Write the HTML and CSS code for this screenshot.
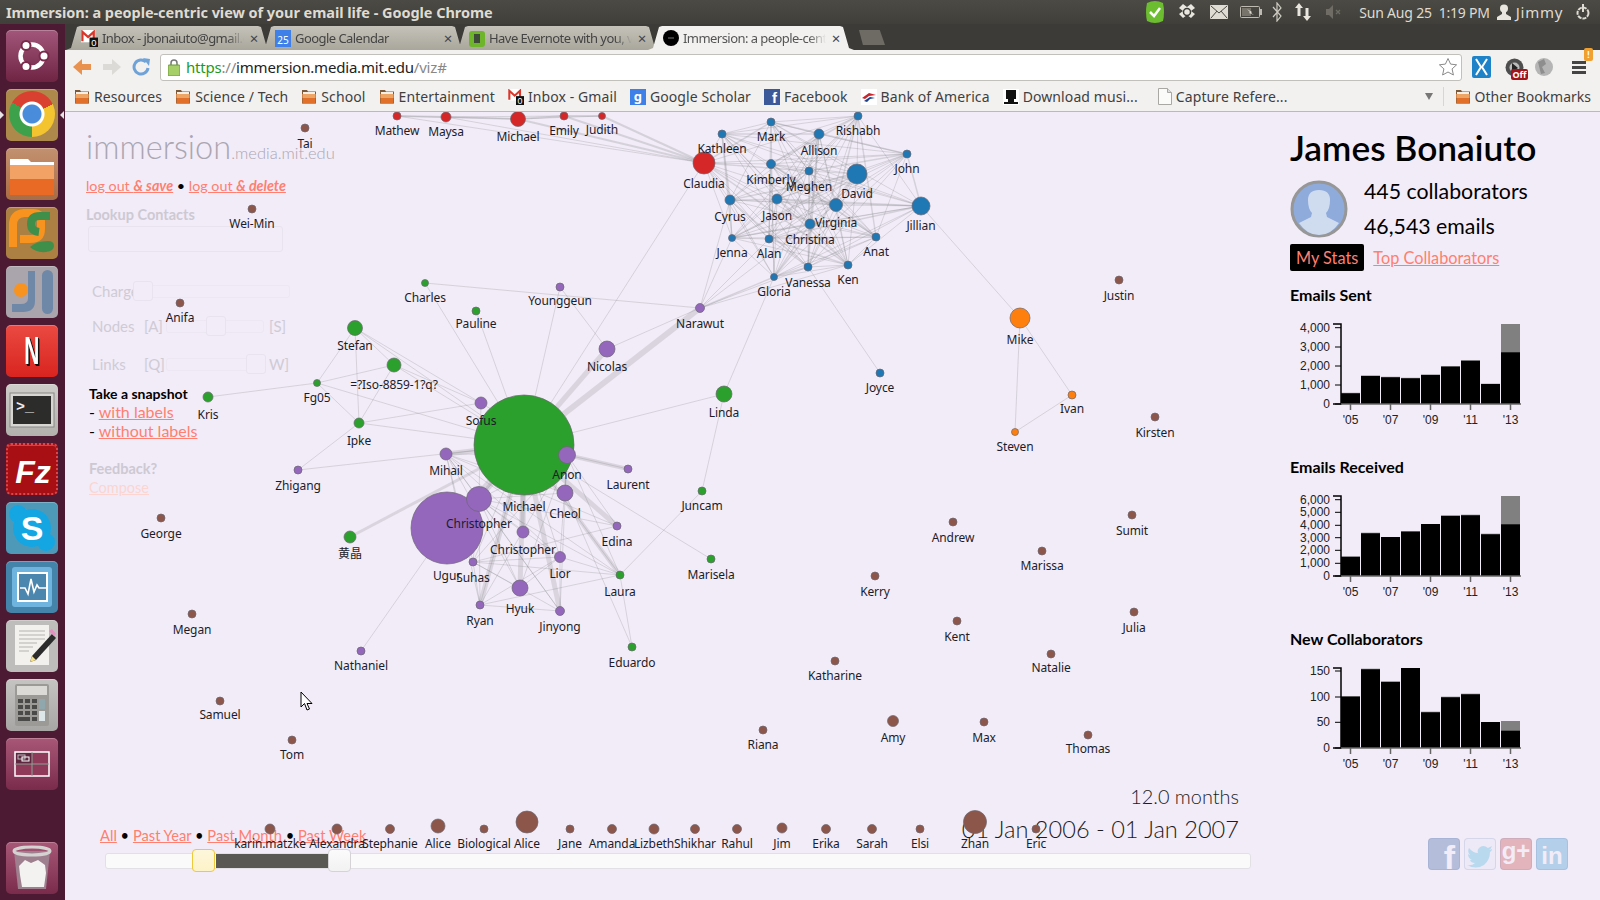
FILE: index.html
```html
<!DOCTYPE html>
<html lang="en">

<head>
    <meta charset="UTF-8">
    <title>Immersion: a people-centric view of your email life</title>
    <link rel="stylesheet" href="styles.css">
</head>

<body>
    <svg class="defs" width="0" height="0">
        <symbol id="folder" viewBox="0 0 16 15">
            <path d="M1 1h5l1 1.500h8v12H1z" fill="#7a5a3a"/>
            <rect x="2" y="3" width="12" height="2" fill="#f4f0e8"/>
            <rect x="1.500" y="5" width="13" height="9.500" fill="#e0702a"/>
            <rect x="1.500" y="5" width="13" height="4" fill="#eda565"/>
        </symbol>
        <symbol id="gmail" viewBox="0 0 18 18">
            <rect x="0" y="0" width="15" height="13" fill="#fff"/>
            <path d="M1.500 12V2l6 5.500 6-5.500v10" fill="none" stroke="#d8372c" stroke-width="2.400"/>
            <rect x="9" y="8" width="9" height="10" fill="#111"/>
        </symbol>
    </svg>

    <header class="topbar">
        <div class="window-title">Immersion: a people-centric view of your email life - Google Chrome</div>
        <div class="indicators">
            <svg class="ind ind-skype" width="22" height="24" viewBox="0 0 22 24"><path d="M3 3q8-4 16 0 2 9 0 18-8 4-16 0Q1 12 3 3z" fill="#6cbd2f"/><path d="M6 12l4 4 6-8" fill="none" stroke="#fff" stroke-width="2.500"/></svg>
            <svg class="ind ind-box" width="18" height="18" viewBox="0 0 18 18"><path d="M5 1l4 3 4-3 4 4-4 3 4 3-4 4-4-3-4 3-4-4 4-3-4-3z" fill="#e8e6df"/><circle cx="9" cy="9" r="3.500" fill="none" stroke="#3f3d38" stroke-width="1.500"/></svg>
            <svg class="ind ind-mail" width="18" height="14" viewBox="0 0 18 14"><rect width="18" height="14" rx="1" fill="#dfdcd3"/><path d="M1 1l8 7 8-7M1 13l6-7M17 13l-6-7" fill="none" stroke="#4a4842"/></svg>
            <svg class="ind ind-battery" width="22" height="12" viewBox="0 0 22 12"><rect x=".5" y=".5" width="19" height="11" rx="1" fill="none" stroke="#bdbab1"/><rect x="20" y="3" width="2" height="6" fill="#bdbab1"/><rect x="2" y="2" width="9" height="8" fill="#77746c"/><path d="M7 3l5 3-1 1 3 2-5-2 1-1z" fill="#dfdcd3"/></svg>
            <svg class="ind ind-blue" width="10" height="20" viewBox="0 0 10 20"><path d="M1 5l8 9-4 5V1l4 5-8 9" fill="none" stroke="#cfccc3" stroke-width="1.200"/></svg>
            <svg class="ind ind-net" width="18" height="20" viewBox="0 0 18 20"><path d="M5 1l4 5H6.500v8h-3V6H1zM13 19l4-5h-2.500V6h-3v8H9z" fill="#e8e6df"/></svg>
            <svg class="ind ind-sound" width="18" height="14" viewBox="0 0 18 14"><path d="M1 4h3l4-4v14l-4-4H1z" fill="#6e6c65"/><path d="M11 5l4 4M15 5l-4 4" stroke="#6e6c65" stroke-width="1.300"/></svg>
            <div class="clock">Sun Aug 25&nbsp; 1:19 PM</div>
            <svg class="ind ind-user" width="14" height="16" viewBox="0 0 14 16"><circle cx="7" cy="4.500" r="4" fill="#e8e6df"/><path d="M5 8h4v2l5 3v3H0v-3l5-3z" fill="#e8e6df"/></svg>
            <div class="user-name">Jimmy</div>
            <svg class="ind ind-power" width="16" height="18" viewBox="0 0 16 18"><circle cx="8" cy="10" r="5.500" fill="none" stroke="#dfdcd3" stroke-width="2" stroke-dasharray="4 1"/><rect x="7" y="1" width="2" height="8" fill="#dfdcd3"/></svg>
        </div>
    </header>

    <div class="desktop">
        <nav class="launcher">
            <div class="tile tile-ubuntu">
                <svg viewBox="0 0 52 52"><circle cx="26" cy="26" r="11.500" fill="none" stroke="#fff" stroke-width="4.500"/><g fill="#fff" stroke="#7a2b4c" stroke-width="2"><circle cx="38" cy="26" r="4.500"/><circle cx="20" cy="15.500" r="4.500"/><circle cx="20" cy="36.500" r="4.500"/></g></svg>
            </div>
            <div class="tile tile-chrome"><div class="chrome-logo"></div></div>
            <div class="tile tile-files">
                <svg viewBox="0 0 52 52"><path d="M4 11h18l3 3h23v10H4z" fill="#fff"/><path d="M4 17h44v30H4z" fill="#e96a25"/><path d="M4 17h44v14H4z" fill="#f2a264"/></svg>
            </div>
            <div class="tile tile-pycharm">
                <svg viewBox="0 0 52 52"><path d="M7 40V18Q7 7 18 6h9q8 0 8 8v8q0 10-11 10H14" fill="none" stroke="#f7931e" stroke-width="8"/><path d="M44 9H34q-9 0-9 8 0 7 8 8" fill="none" stroke="#3f8f4b" stroke-width="8"/><path d="M24 40q6-6 18-6 6 0 6 5t-8 6q-10 1-16-5z" fill="#3f8f4b"/></svg>
            </div>
            <div class="tile tile-ji">
                <svg viewBox="0 0 52 52"><path d="M22 5h7v30q0 11-12 11H6v-8h9q7 0 7-6z" fill="#7088a8"/><rect x="36" y="4" width="11" height="44" rx="5.500" fill="#7088a8"/><circle cx="15" cy="24" r="7" fill="#f7931e"/></svg>
            </div>
            <div class="tile tile-netflix"><span class="tile-n">N</span></div>
            <div class="tile tile-terminal">
                <svg viewBox="0 0 52 52"><rect x="4" y="9" width="44" height="34" fill="#d8d6d3" stroke="#8a8886"/><rect x="7" y="12" width="38" height="28" fill="#2c2c2a"/><text x="10" y="27" class="term-prompt">&gt;_</text></svg>
            </div>
            <div class="tile tile-zilla">
                <svg viewBox="0 0 52 52"><text x="25" y="38" class="tile-letter tile-fz">Fz</text></svg>
            </div>
            <div class="tile tile-skype">
                <svg viewBox="0 0 52 52"><circle cx="26" cy="26" r="19" fill="#14a6e3"/><circle cx="12" cy="12" r="9" fill="#14a6e3"/><circle cx="40" cy="40" r="9" fill="#14a6e3"/><text x="26" y="38" class="tile-letter tile-s">S</text></svg>
            </div>
            <div class="tile tile-monitor">
                <svg viewBox="0 0 52 52"><rect x="6" y="6" width="40" height="40" rx="3" fill="#6fb4de"/><rect x="12" y="12" width="29" height="28" fill="#4a86ad" stroke="#fff" stroke-width="2"/><path d="M14 27h5l3 6 3-15 3 13 3-7 2 3h7" fill="none" stroke="#fff" stroke-width="1.600"/></svg>
            </div>
            <div class="tile tile-gedit">
                <svg viewBox="0 0 52 52"><rect x="9" y="5" width="34" height="40" fill="#f3f1ee"/><path d="M13 11h26M13 15h26M13 19h26M13 23h18M13 27h14M13 31h10" stroke="#b5b3b0"/><path d="M46 14L26 36l-2 6 6-2 20-22z" fill="#2b2b2b"/><path d="M24 42l2-6 4 4z" fill="#f5e08a"/><path d="M43 11l5 5 2-2-4-5z" fill="#e48fc0"/></svg>
            </div>
            <div class="tile tile-calc">
                <svg viewBox="0 0 52 52"><rect x="9" y="5" width="34" height="42" rx="2" fill="#9c9a97"/><rect x="11" y="7" width="30" height="9" fill="#dcdad6"/><g fill="#4a4a48"><rect x="12" y="20" width="5" height="4"/><rect x="19" y="20" width="5" height="4"/><rect x="26" y="20" width="5" height="4"/><rect x="12" y="26" width="5" height="4"/><rect x="19" y="26" width="5" height="4"/><rect x="26" y="26" width="5" height="4"/><rect x="12" y="32" width="5" height="4"/><rect x="19" y="32" width="5" height="4"/><rect x="26" y="32" width="5" height="4"/><rect x="12" y="38" width="12" height="4"/><rect x="26" y="38" width="5" height="4"/></g><rect x="33" y="20" width="6" height="10" fill="#8fa7ad"/><rect x="33" y="32" width="6" height="10" fill="#dce6e8"/></svg>
            </div>
            <div class="tile tile-workspace">
                <svg viewBox="0 0 52 52"><rect x="9" y="14" width="34" height="24" fill="#8e3a58" stroke="#fff" stroke-width="1.500"/><rect x="10" y="15" width="16" height="11" fill="#5d2740"/><path d="M26 14v24M9 26h34" stroke="#8aa394"/><rect x="12" y="17" width="7" height="4" fill="none" stroke="#bbb"/><rect x="16" y="19" width="7" height="4" fill="none" stroke="#fff"/></svg>
            </div>
            <div class="tile tile-trash">
                <svg viewBox="0 0 52 52"><path d="M8 9h36l-4 38H12z" fill="#9d7f8e"/><path d="M13 24l6-6 6 3 7-3 7 5 1 8-2 14H16l-2-12z" fill="#f3f2f1"/><ellipse cx="26" cy="9" rx="18" ry="4" fill="none" stroke="#d5d3d2" stroke-width="3"/></svg>
            </div>
        </nav>

        <div class="browser">
            <div class="tabstrip">
                <div class="tab">
                    <svg class="favicon" width="17" height="17" viewBox="0 0 18 18"><use href="#gmail"/><text x="13.500" y="17" class="badge-zero">0</text></svg>
                    <span class="tab-title">Inbox - jbonaiuto@gmail.c</span>
                    <span class="tab-close">×</span>
                </div>
                <div class="tab">
                    <span class="cal-icon">25</span>
                    <span class="tab-title">Google Calendar</span>
                    <span class="tab-close">×</span>
                </div>
                <div class="tab">
                    <svg class="favicon" width="16" height="17" viewBox="0 0 16 17"><rect y="1" width="16" height="16" rx="3" fill="#6fb52c"/><path d="M5 4h6v9H5z" fill="#3f4a3a"/></svg>
                    <span class="tab-title">Have Evernote with you, v</span>
                    <span class="tab-close">×</span>
                </div>
                <div class="tab tab-active">
                    <svg class="favicon" width="16" height="16" viewBox="0 0 16 16"><circle cx="8" cy="8" r="8" fill="#000"/><rect x="5" y="7.500" width="6" height="1" fill="#777"/></svg>
                    <span class="tab-title">Immersion: a people-cent</span>
                    <span class="tab-close">×</span>
                </div>
                <div class="tab-new"></div>
            </div>

            <div class="toolbar">
                <svg class="nav-icon" width="20" height="20" viewBox="0 0 20 20"><path d="M10 2L1 10l9 8v-5h9V7h-9z" fill="#e9924f"/></svg>
                <svg class="nav-icon" width="20" height="20" viewBox="0 0 20 20"><path d="M10 2l9 8-9 8v-5H1V7h9z" fill="#dcdad6"/></svg>
                <svg class="nav-icon" width="20" height="20" viewBox="0 0 20 20"><path d="M16 11a7 7 0 1 1-2-6" fill="none" stroke="#6fa3d8" stroke-width="3"/><path d="M11 1l7 1-1 7z" fill="#6fa3d8"/></svg>
                <div class="omnibox">
                    <svg class="lock" width="12" height="18" viewBox="0 0 12 18"><path d="M3 8V5a3 3 0 0 1 6 0v3" fill="none" stroke="#777" stroke-width="1.500"/><rect y="7" width="12" height="11" rx="1" fill="#a6cf6a" stroke="#6b9a36"/></svg>
                    <div class="url"><span class="url-https">https</span><span class="url-dim">://</span>immersion.media.mit.edu<span class="url-dim">/viz#</span></div>
                    <svg class="star" width="20" height="20" viewBox="0 0 20 20"><path d="M10 1.500l2.600 5.600 6 .7-4.500 4.100 1.300 6.100L10 15l-5.400 3 1.300-6.100L1.400 7.800l6-.7z" fill="#fff" stroke="#8a8a8a"/></svg>
                </div>
                <div class="ext-icons">
                    <svg width="19" height="30" viewBox="0 0 19 30"><rect y="4" width="19" height="22" rx="2" fill="#1e82c8"/><path d="M4 7l5 8-5 8M15 7l-5 8 5 8" fill="none" stroke="#fff" stroke-width="2"/></svg>
                    <div class="ext-off">
                        <svg width="19" height="19" viewBox="0 0 19 19"><circle cx="9.500" cy="9.500" r="9" fill="#4e4e4e"/><circle cx="9.500" cy="9.500" r="5" fill="#bbb"/><path d="M7 5l6 5-6 4z" fill="#222"/></svg>
                        <span class="off-badge">Off</span>
                    </div>
                    <svg width="18" height="20" viewBox="0 0 18 20"><circle cx="9" cy="10" r="9" fill="#b5b5b5"/><path d="M3 5l6-3 2 5-4 3 3 6-4 1z" fill="#8e8e8e"/></svg>
                    <div class="menu-btn">
                        <span class="menu-bars"></span>
                        <span class="menu-alert">!</span>
                    </div>
                </div>
            </div>

            <div class="bookmarks">
                <div class="bm"><svg width="16" height="15"><use href="#folder"/></svg>Resources</div>
                <div class="bm"><svg width="16" height="15"><use href="#folder"/></svg>Science / Tech</div>
                <div class="bm"><svg width="16" height="15"><use href="#folder"/></svg>School</div>
                <div class="bm"><svg width="16" height="15"><use href="#folder"/></svg>Entertainment</div>
                <div class="bm"><svg width="16" height="16" viewBox="0 0 18 18"><use href="#gmail"/><text x="13.500" y="17" class="badge-zero">0</text></svg>Inbox - Gmail</div>
                <div class="bm"><span class="bm-scholar">g</span>Google Scholar</div>
                <div class="bm"><span class="bm-fb">f</span>Facebook</div>
                <div class="bm"><svg width="16" height="16" viewBox="0 0 16 16"><rect width="16" height="16" fill="#fff"/><path d="M1 9l7-5 7 2-7 1-4 3z" fill="#c9252d"/><path d="M3 12l6-4 5 1-5 1-3 3z" fill="#1a3f8c"/></svg>Bank of America</div>
                <div class="bm"><svg width="16" height="16" viewBox="0 0 16 16"><rect width="16" height="16" fill="#fff"/><rect x="3" y="1" width="10" height="9" fill="#111"/><path d="M1 13h14v2H1zM5 10h6v3H5z" fill="#111"/></svg>Download musi...</div>
                <div class="bm bm-doc"><svg width="14" height="17" viewBox="0 0 14 17"><path d="M.5.500h9l4 4v12H.5z" fill="#fbfbfa" stroke="#a9a8a4"/><path d="M9.500.500v4h4" fill="#ddd" stroke="#a9a8a4"/></svg>Capture Refere...</div>
                <div class="bm-more"></div>
                <div class="bm bm-other"><svg width="16" height="15"><use href="#folder"/></svg>Other Bookmarks</div>
            </div>

            <main class="viz">
                <aside class="controls">
                    <div class="logo">immersion<span class="logo-host">.media.mit.edu</span></div>
                    <div class="logout"><a href="#">log out <b><i>&amp; save</i></b></a> • <a href="#">log out <b><i>&amp; delete</i></b></a></div>
                    <div class="lookup-title">Lookup Contacts</div>
                    <div class="lookup-input"></div>
                    <div class="setting setting-charge">
                        <span class="setting-label">Charge</span>
                        <div class="track"><span class="thumb thumb-charge"></span></div>
                    </div>
                    <div class="setting">
                        <span class="setting-label">Nodes</span>
                        <span class="setting-key">[A]</span>
                        <div class="track"><span class="thumb thumb-nodes"></span></div>
                        <span class="setting-key">[S]</span>
                    </div>
                    <div class="setting">
                        <span class="setting-label">Links</span>
                        <span class="setting-key">[Q]</span>
                        <div class="track"><span class="thumb thumb-links"></span></div>
                        <span class="setting-key">W]</span>
                    </div>
                    <div class="snapshot">
                        <div class="snapshot-title">Take a snapshot</div>
                        <div>- <a href="#">with labels</a></div>
                        <div>- <a href="#">without labels</a></div>
                    </div>
                    <div class="feedback">
                        <div class="feedback-title">Feedback?</div>
                        <a href="#">Compose</a>
                    </div>
                </aside>

                <section class="profile">
                    <h1 class="profile-name">James Bonaiuto</h1>
                    <div class="profile-summary">
                        <svg class="avatar" width="58" height="58" viewBox="0 0 58 58"><circle cx="29" cy="29" r="27" fill="#8fabdc" stroke="#979797" stroke-width="3"/><path d="M18 20q0-10 11-10t11 10q0 9-4 13l1 4 12 6q-8 12-20 12T9 43l12-6 1-4q-4-4-4-13z" fill="#cfdcf0"/></svg>
                        <div class="profile-counts">
                            <div>445 collaborators</div>
                            <div>46,543 emails</div>
                        </div>
                    </div>
                    <div class="profile-tabs">
                        <span class="tab-current">My Stats</span>
                        <a href="#">Top Collaborators</a>
                    </div>
                    <h2 class="chart-title">Emails Sent</h2>
                    <svg class="chart" id="chart-sent" width="250" height="112"></svg>
                    <h2 class="chart-title">Emails Received</h2>
                    <svg class="chart" id="chart-received" width="250" height="112"></svg>
                    <h2 class="chart-title">New Collaborators</h2>
                    <svg class="chart" id="chart-new" width="250" height="112"></svg>
                </section>

                <section class="timeline">
                    <div class="timeline-head">
                        <div class="ranges"><a href="#">All</a> • <a href="#">Past Year</a> • <a href="#">Past Month</a> • <a href="#">Past Week</a></div>
                        <div class="period">
                            <div class="period-length">12.0 months</div>
                            <div class="period-dates">01 Jan 2006 - 01 Jan 2007</div>
                        </div>
                    </div>
                    <div class="range-track">
                        <span class="range-fill"></span>
                        <span class="range-handle range-handle-from"></span>
                        <span class="range-handle range-handle-to"></span>
                    </div>
                </section>

                <div class="social">
                    <span class="social-btn social-fb">f</span>
                    <span class="social-btn social-tw">
                        <svg width="26" height="24" viewBox="0 0 26 24"><path d="M25 4q-2 1-3 1 2-1 3-4-2 1-4 2-5-4-9 0-2 2-1 5Q6 8 2 3 0 7 3 10q-1 0-2-1 0 4 4 6H3q1 3 5 3-3 3-8 2 9 5 17 0 6-5 6-13 2-1 2-3z" fill="#b9d9ef"/></svg>
                    </span>
                    <span class="social-btn social-gp">g+</span>
                    <span class="social-btn social-in">in</span>
                </div>

                <svg class="graph" id="graph" viewBox="65 112 1535 788" width="1535" height="788"></svg>

                <svg class="pointer" width="14" height="21" viewBox="0 0 14 21"><path d="M1 1v15l3.500-3.500L7 19l2.500-1-2.500-5.500h5z" fill="#fff" stroke="#000"/></svg>
            </main>
        </div>
    </div>

    <script src="script.js"></script>
</body>

</html>
```

FILE: styles.css
```css
* {
    box-sizing: border-box;
}

html,
body {
    margin: 0;
    height: 900px;
    overflow: hidden;
}

body {
    font-family: "Lato", "Noto Sans", sans-serif;
    background-color: #3c3b37;
}

.defs {
    position: absolute;
}

.badge-zero {
    fill: #fff;
    font-family: "Liberation Sans", sans-serif;
    font-size: 10px;
    letter-spacing: 0;
    text-anchor: middle;
}

a {
    color: #ff7f70;
}

/* ubuntu top panel */
.topbar {
    display: flex;
    align-items: center;
    justify-content: space-between;
    height: 24px;
    padding-left: 6px;
    background: linear-gradient(#4b4a44, #403f3a);
    font-family: "Noto Sans", sans-serif;
}

.window-title {
    color: #dfdbd2;
    font-size: 14.500px;
    font-weight: 700;
    letter-spacing: -0.05px;
}

.indicators {
    display: flex;
    align-items: center;
    color: #dfdbd2;
    font-size: 14px;
    letter-spacing: -0.2px;
}

.ind {
    flex: none;
}

.ind-skype {
    margin-right: 12px;
}

.ind-box {
    margin-right: 14px;
}

.ind-mail {
    margin-right: 12px;
}

.ind-battery {
    margin-right: 10px;
}

.ind-blue {
    margin-right: 12px;
}

.ind-net {
    margin-right: 13px;
}

.ind-sound {
    margin-right: 16px;
}

.clock {
    margin-right: 7px;
}

.user-name {
    margin-left: 5px;
    margin-right: 12px;
    font-size: 15px;
    letter-spacing: 0.7px;
}

.ind-power {
    margin-right: 9px;
}

.desktop {
    display: flex;
    height: 876px;
}

/* launcher */
.launcher {
    position: relative;
    display: flex;
    flex-direction: column;
    flex: none;
    gap: 7px;
    width: 65px;
    padding: 6px;
    background-color: #4d1a33;
}

.launcher::before,
.launcher::after {
    content: "";
    position: absolute;
    top: 87px;
    border-top: 4px solid transparent;
    border-bottom: 4px solid transparent;
}

.launcher::before {
    left: 0;
    border-left: 4px solid #e8e4e6;
}

.launcher::after {
    right: 1px;
    border-right: 4px solid #e8e4e6;
}

.tile {
    position: relative;
    flex: none;
    width: 52px;
    height: 52px;
    border-radius: 5px;
    box-shadow: inset 0 1px 0 rgba(255, 255, 255, 0.25);
    overflow: hidden;
}

.tile svg {
    display: block;
    width: 52px;
    height: 52px;
}

.tile-ubuntu {
    background: linear-gradient(#a2577a, #6f2444);
}

.tile-chrome {
    background: #ad8a4c;
}

.chrome-logo {
    position: absolute;
    top: 2px;
    left: 3px;
    width: 46px;
    height: 46px;
    border-radius: 50%;
    background:
        radial-gradient(circle, #4a8cdc 0 9px, #fff 10px 12px, transparent 13px),
        conic-gradient(#d9402f 0 65deg, #f4c430 65deg 180deg, #3ca14a 180deg 300deg, #d9402f 300deg);
}

.tile-files {
    background: linear-gradient(#c39170, #a96c44);
}

.tile-pycharm {
    background: #ac8043;
}

.tile-ji {
    background: #aaa5ac;
}

.tile-netflix {
    display: flex;
    align-items: center;
    justify-content: center;
    background: linear-gradient(#ea4a42, #d9241f);
}

.tile-n {
    color: #fff;
    font-family: "Liberation Sans", sans-serif;
    font-size: 38px;
    font-weight: 700;
    text-shadow: 2px 1px 0 #111, 3px 2px 0 #111;
    transform: scaleX(0.55);
}

.tile-terminal {
    background: linear-gradient(#cfcdca, #b3b1ae);
}

.tile-zilla {
    background: #a80f14;
    border: 2px dotted #d6494c;
}

.tile-skype {
    background: #4f99b8;
}

.tile-monitor {
    background: #4484ab;
}

.tile-gedit {
    background: #bfbdbb;
}

.tile-calc {
    background: linear-gradient(#c6c4c2, #a8a6a4);
}

.tile-workspace {
    background: linear-gradient(#a85776, #7a2b4c);
}

.tile-trash {
    margin-top: 45px;
    background: linear-gradient(#a85776, #7a2b4c);
}

.tile-letter {
    text-anchor: middle;
    fill: #fff;
    font-weight: 700;
}

.tile-fz {
    font-family: "Liberation Sans", sans-serif;
    font-size: 32px;
    font-style: italic;
}

.tile-s {
    font-family: "Liberation Sans", sans-serif;
    font-size: 34px;
}

.term-prompt {
    fill: #eee;
    font-family: "Liberation Mono", monospace;
    font-size: 15px;
    font-weight: 700;
}

.browser {
    display: flex;
    flex-direction: column;
    flex: 1;
    min-width: 0;
}

/* tabs */
.tabstrip {
    display: flex;
    flex: none;
    align-items: flex-end;
    height: 26px;
    padding-left: 1px;
    background-color: #3c3b37;
    font-family: "Noto Sans", sans-serif;
}

.tab {
    display: flex;
    flex: none;
    align-items: center;
    width: 206px;
    height: 24px;
    margin-right: -12px;
    padding: 0 12px 0 15px;
    background: linear-gradient(#c5c2b9, #a9a69c);
    clip-path: polygon(0 100%, 5px 92%, 11px 4%, 14px 0, calc(100% - 14px) 0, calc(100% - 11px) 4%, calc(100% - 5px) 92%, 100% 100%);
    color: #444;
    font-size: 13px;
}

.tab-active {
    position: relative;
    background: #f2f1ef;
    color: #555;
}

.favicon {
    flex: none;
}

.cal-icon {
    flex: none;
    width: 16px;
    height: 17px;
    background-color: #3f7fe8;
    color: #fff;
    font-size: 10px;
    line-height: 20px;
    text-align: center;
}

.tab-title {
    flex: 1;
    min-width: 0;
    margin-left: 4px;
    white-space: nowrap;
    letter-spacing: -0.55px;
    -webkit-mask-image: linear-gradient(to right, #000 88%, transparent);
    mask-image: linear-gradient(to right, #000 88%, transparent);
}

.tab-close {
    flex: none;
    width: 12px;
    margin-left: 4px;
    color: #444;
    font-size: 15px;
    line-height: 1;
    text-align: center;
}

.tab-new {
    flex: none;
    width: 26px;
    height: 15px;
    margin-bottom: 5px;
    margin-left: 17px;
    background-color: #6d6b64;
    clip-path: polygon(0 0, 80% 0, 100% 100%, 15% 100%);
}

/* address row */
.toolbar {
    display: flex;
    flex: none;
    align-items: center;
    height: 32px;
    padding: 2px 0 0 7px;
    background-color: #f2f1ef;
}

.nav-icon {
    flex: none;
    margin-right: 10px;
}

.omnibox {
    display: flex;
    flex: none;
    align-items: center;
    width: 1302px;
    height: 27px;
    margin-left: -2px;
    padding: 0 3px 0 7px;
    background-color: #fff;
    border: 1px solid #c2c0bb;
    border-radius: 3px;
    font-family: "Noto Sans", sans-serif;
    font-size: 15px;
}

.lock {
    flex: none;
}

.url {
    flex: 1;
    margin-left: 6px;
    color: #222;
    letter-spacing: -0.2px;
}

.url-https {
    color: #1d9a1d;
}

.url-dim {
    color: #888;
}

.star {
    flex: none;
}

.ext-icons {
    display: flex;
    align-items: center;
    margin-left: 10px;
}

.ext-off {
    position: relative;
    width: 19px;
    height: 19px;
    margin-left: 14px;
}

.off-badge {
    position: absolute;
    left: 6px;
    top: 11px;
    width: 17px;
    height: 11px;
    border-radius: 2px;
    background-color: #a31318;
    color: #fff;
    font-family: "Noto Sans", sans-serif;
    font-size: 9px;
    font-weight: 700;
    line-height: 11px;
    text-align: center;
}

.ext-icons > svg:last-of-type {
    margin-left: 11px;
}

.menu-btn {
    position: relative;
    width: 14px;
    height: 16px;
    margin-left: 19px;
}

.menu-bars {
    display: block;
    margin-top: 2px;
    height: 13px;
    background: repeating-linear-gradient(#444 0 3px, transparent 3px 5px);
}

.menu-alert {
    position: absolute;
    top: -11px;
    left: 12px;
    width: 9px;
    height: 13px;
    border-radius: 2px;
    background-color: #f0a030;
    color: #fff;
    font-size: 10px;
    font-weight: 700;
    line-height: 13px;
    text-align: center;
}

/* bookmarks row */
.bookmarks {
    display: flex;
    flex: none;
    align-items: center;
    height: 30px;
    padding-left: 9px;
    background-color: #f2f1ef;
    border-bottom: 1px solid #bcbab5;
    color: #3f3f3f;
    font-family: "Noto Sans", sans-serif;
    font-size: 14px;
    letter-spacing: 0.1px;
}

.bm {
    display: flex;
    align-items: center;
    flex: none;
    gap: 4px;
    margin-right: 13px;
    white-space: nowrap;
}

.bm-doc {
    margin-left: 7px;
}

.bm-scholar {
    width: 16px;
    height: 16px;
    background-color: #3f7fe8;
    color: #fff;
    font-size: 13px;
    font-weight: 700;
    line-height: 14px;
    text-align: center;
}

.bm-fb {
    width: 16px;
    height: 16px;
    padding-right: 3px;
    background-color: #3b5998;
    color: #fff;
    font-family: "Liberation Sans", sans-serif;
    font-size: 15px;
    font-weight: 700;
    line-height: 18px;
    text-align: right;
}

.bm-more {
    flex: none;
    width: 0;
    height: 0;
    margin-left: auto;
    border-top: 7px solid #777;
    border-left: 4px solid transparent;
    border-right: 4px solid transparent;
}

.bm-other {
    margin-left: 10px;
    margin-right: 9px;
    padding-left: 11px;
    border-left: 1px solid #d8d6d1;
    letter-spacing: 0;
}

/* visualization */
.viz {
    position: relative;
    flex: 1;
    background-color: #f2ecf8;
    overflow: hidden;
}

.graph {
    position: absolute;
    top: 0;
    left: 0;
}

.pointer {
    position: absolute;
    left: 235px;
    top: 579px;
}

.node-label {
    fill: #1c1c28;
    font-family: "Noto Sans", "Noto Sans CJK SC", sans-serif;
    font-size: 12px;
    text-anchor: middle;
    letter-spacing: -0.1px;
}

.controls {
    position: absolute;
    top: 15px;
    left: 21px;
    width: 200px;
    font-size: 15px;
}

.logo {
    color: #aaa6b2;
    font-size: 32.600px;
    font-weight: 300;
    line-height: 40px;
    white-space: nowrap;
}

.logo-host {
    font-size: 16.500px;
}

.logout {
    margin-top: 3px;
    font-size: 14.300px;
    white-space: nowrap;
    line-height: 20px;
}

.lookup-title {
    margin-top: 9px;
    color: #cdc9d3;
    font-size: 14.500px;
    font-weight: 700;
    line-height: 20px;
}

.lookup-input {
    width: 195px;
    height: 26px;
    margin: 1px 0 0 2px;
    border: 1px solid #e8e3ef;
    border-radius: 3px;
}

.setting {
    display: flex;
    align-items: center;
    width: 192px;
    height: 22px;
    margin: 0 0 16px 6px;
    color: #cfcbd5;
}

.setting-charge {
    width: 198px;
    margin-top: 28px;
    margin-bottom: 13px;
}

.setting-label {
    flex: none;
    width: 52px;
    white-space: nowrap;
}

.setting-charge .setting-label {
    width: 41px;
}

.setting-key {
    flex: none;
    width: 22px;
    white-space: nowrap;
}

.setting-key:last-child {
    margin-left: 5px;
    width: 15px;
}

.track {
    position: relative;
    flex: 1;
    height: 13px;
    border: 1px solid #ece7f2;
    border-radius: 3px;
}

.thumb {
    position: absolute;
    top: -5px;
    width: 20px;
    height: 20px;
    background-color: #f2ecf8;
    border: 1px solid #e8e3ef;
    border-radius: 3px;
}

.thumb-charge {
    left: -1px;
}

.thumb-nodes {
    left: 39px;
}

.thumb-links {
    left: 79px;
}

.snapshot {
    margin: -6px 0 0 3px;
    color: #000;
    font-size: 16px;
    line-height: 19px;
}

.snapshot-title {
    font-size: 14px;
    font-weight: 700;
    line-height: 17px;
}

.feedback {
    margin: 19px 0 0 3px;
    line-height: 19px;
    font-size: 14.500px;
}

.feedback-title {
    color: #cdc9d3;
    font-weight: 700;
}

.feedback a {
    color: #fcd5d1;
}

/* right side stats */
.profile {
    position: absolute;
    top: 14px;
    left: 1225px;
    width: 300px;
}

.profile-name {
    margin: 0;
    color: #000;
    font-size: 35.300px;
    font-weight: 600;
    line-height: 44px;
}

.profile-summary {
    display: flex;
    align-items: center;
    margin-top: 3px;
}

.avatar {
    flex: none;
}

.profile-counts {
    margin-left: 16px;
    padding-top: 1px;
    font-size: 21.300px;
    line-height: 35px;
}

.profile-tabs {
    display: flex;
    align-items: center;
    gap: 9px;
    margin-bottom: 14px;
    font-size: 16.300px;
}

.tab-current {
    padding: 3px 6px;
    background-color: #000;
    border-radius: 2px;
    color: #ff7f70;
    line-height: 21px;
}

.chart-title {
    margin: 0;
    color: #000;
    font-size: 16px;
    font-weight: 700;
    line-height: 20px;
}

.chart {
    display: block;
    margin-top: 13px;
    margin-bottom: 27px;
    overflow: visible;
}

.chart text {
    fill: #222;
    font-family: "Liberation Sans", sans-serif;
    font-size: 12px;
}

/* bottom time range */
.timeline {
    position: absolute;
    left: 40px;
    top: 741px;
    width: 1146px;
}

.timeline-head {
    display: flex;
    justify-content: space-between;
    align-items: flex-end;
    height: 0;
    padding-right: 12px;
}

.ranges {
    margin-bottom: 8px;
    margin-left: -5px;
    font-size: 14.700px;
    line-height: 20px;
    white-space: nowrap;
}

.period {
    margin-bottom: 6px;
    color: #1c1c1c;
    font-weight: 300;
    text-align: right;
}

.period-length {
    font-size: 19.900px;
    line-height: 30px;
}

.period-dates {
    font-size: 23.600px;
    line-height: 36px;
}

.range-track {
    position: relative;
    height: 16px;
    background-color: #fbfafb;
    border: 1px solid #e2dfe5;
    border-radius: 3px;
}

.range-fill {
    position: absolute;
    top: 0;
    bottom: 0;
    left: 110px;
    width: 113px;
    background-color: #5a5852;
}

.range-handle {
    position: absolute;
    top: -5px;
    width: 23px;
    height: 23px;
    border-radius: 4px;
}

.range-handle-from {
    left: 86px;
    background: linear-gradient(#fdf7db, #fdf3c8);
    border: 1px solid #f0c93a;
}

.range-handle-to {
    left: 222px;
    background: linear-gradient(#fbfbfb, #f3f2f3);
    border: 1px solid #d5d3d6;
}

.social {
    position: absolute;
    top: 726px;
    left: 1363px;
    display: flex;
    gap: 4px;
}

.social-btn {
    display: block;
    width: 32px;
    height: 32px;
    border: 1px solid rgba(120, 140, 190, 0.2);
    border-radius: 4px;
    color: #f2ecf8;
    font-family: "Liberation Sans", sans-serif;
    font-size: 30px;
    font-weight: 700;
    line-height: 34px;
    text-align: center;
}

.social-fb {
    padding-right: 4px;
    background-color: #b4bedb;
    font-size: 34px;
    line-height: 36px;
    text-align: right;
}

.social-tw {
    padding: 3px 2px;
    background-color: #ede9f6;
}

.social-gp {
    background-color: #e3b4bc;
    font-size: 24px;
    line-height: 24px;
}

.social-in {
    background-color: #b3cfe9;
    font-size: 24px;
    line-height: 34px;
}
```

FILE: script.js
```js
const BROWN = "#8c564b", GREEN = "#2ca02c", PURPLE = "#9467bd"
const BLUE = "#1f77b4", RED = "#d62728", ORANGE = "#ff7f0e"

// id, label, x, y, radius, color, label y
const NODES = [
    ["tai", "Tai", 305, 128, 4, BROWN, 143],
    ["mathew", "Mathew", 397, 116, 4, RED, 131],
    ["maysa", "Maysa", 446, 117, 5, RED, 132],
    ["michaelR", "Michael", 518, 119, 7.5, RED, 137],
    ["emily", "Emily", 564, 116, 4, RED, 131],
    ["judith", "Judith", 602, 116, 3.5, RED, 130],
    ["claudia", "Claudia", 704, 163, 11, RED, 184],
    ["wei", "Wei-Min", 252, 209, 4, BROWN, 223],
    ["anifa", "Anifa", 180, 303, 4, BROWN, 317],
    ["kris", "Kris", 208, 397, 5, GREEN, 414],
    ["fg", "Fg05", 317, 383, 3.5, GREEN, 397],
    ["stefan", "Stefan", 355, 328, 7.5, GREEN, 345],
    ["iso", "=?Iso-8859-1?q?", 394, 365, 7, GREEN, 384],
    ["ipke", "Ipke", 359, 423, 5, GREEN, 440],
    ["zhigang", "Zhigang", 298, 470, 4, PURPLE, 485],
    ["charles", "Charles", 425, 283, 3.5, GREEN, 297],
    ["pauline", "Pauline", 476, 311, 4, GREEN, 323],
    ["younggeun", "Younggeun", 560, 287, 4, PURPLE, 300],
    ["nicolas", "Nicolas", 607, 349, 8, PURPLE, 366],
    ["narawut", "Narawut", 700, 308, 4.5, PURPLE, 323],
    ["linda", "Linda", 724, 394, 8, GREEN, 412],
    ["juncam", "Juncam", 702, 491, 4, GREEN, 505],
    ["marisela", "Marisela", 711, 559, 4, GREEN, 574],
    ["huang", "黄晶", 350, 537, 6, GREEN, 553],
    ["nathaniel", "Nathaniel", 361, 651, 4, PURPLE, 665],
    ["eduardo", "Eduardo", 632, 647, 4, GREEN, 662],

    ["michael", "Michael", 524, 445, 50, GREEN, 506],
    ["ugur", "Ugur", 447, 528, 36, PURPLE, 575],
    ["chris", "Christopher", 479, 499, 12.5, PURPLE, 523],
    ["chris2", "Christopher", 523, 532, 6, PURPLE, 549],
    ["anon", "Anon", 567, 455, 8.5, PURPLE, 474],
    ["sofus", "Sofus", 481, 403, 6, PURPLE, 420],
    ["mihail", "Mihail", 446, 454, 6, PURPLE, 470],
    ["laurent", "Laurent", 628, 469, 4, PURPLE, 484],
    ["cheol", "Cheol", 565, 493, 8, PURPLE, 513],
    ["suhas", "Suhas", 473, 562, 4, PURPLE, 577],
    ["edina", "Edina", 617, 526, 4, PURPLE, 541],
    ["lior", "Lior", 560, 557, 5.5, PURPLE, 573],
    ["laura", "Laura", 620, 575, 4, GREEN, 591],
    ["hyuk", "Hyuk", 520, 588, 8, PURPLE, 608],
    ["ryan", "Ryan", 480, 605, 4, PURPLE, 620],
    ["jinyong", "Jinyong", 560, 611, 4.5, PURPLE, 626],

    ["rishabh", "Rishabh", 858, 116, 4, BLUE, 131],
    ["mark", "Mark", 771, 122, 4, BLUE, 137],
    ["kathleen", "Kathleen", 722, 134, 4, BLUE, 149],
    ["allison", "Allison", 819, 134, 5, BLUE, 151],
    ["john", "John", 907, 154, 4, BLUE, 169],
    ["kimberly", "Kimberly", 771, 164, 4.5, BLUE, 180],
    ["meghen", "Meghen", 809, 171, 4, BLUE, 187],
    ["david", "David", 857, 174, 10, BLUE, 194],
    ["cyrus", "Cyrus", 730, 200, 5, BLUE, 217],
    ["jason", "Jason", 777, 199, 5, BLUE, 216],
    ["virginia", "Virginia", 836, 205, 6.5, BLUE, 223],
    ["jillian", "Jillian", 921, 206, 9, BLUE, 226],
    ["christina", "Christina", 810, 224, 5, BLUE, 240],
    ["jenna", "Jenna", 732, 238, 3.5, BLUE, 253],
    ["alan", "Alan", 769, 239, 4, BLUE, 254],
    ["anat", "Anat", 876, 237, 4, BLUE, 252],
    ["ken", "Ken", 848, 265, 4, BLUE, 280],
    ["vanessa", "Vanessa", 808, 267, 4, BLUE, 283],
    ["gloria", "Gloria", 774, 277, 3.5, BLUE, 292],
    ["joyce", "Joyce", 880, 373, 4, BLUE, 388],

    ["mike", "Mike", 1020, 318, 10, ORANGE, 339],
    ["ivan", "Ivan", 1072, 395, 4, ORANGE, 408],
    ["steven", "Steven", 1015, 432, 3.5, ORANGE, 446],

    ["justin", "Justin", 1119, 280, 4, BROWN, 295],
    ["kirsten", "Kirsten", 1155, 417, 4, BROWN, 432],
    ["sumit", "Sumit", 1132, 515, 4, BROWN, 530],
    ["andrew", "Andrew", 953, 522, 4, BROWN, 537],
    ["marissa", "Marissa", 1042, 551, 4, BROWN, 565],
    ["kerry", "Kerry", 875, 576, 4, BROWN, 591],
    ["julia", "Julia", 1134, 612, 4, BROWN, 627],
    ["kent", "Kent", 957, 621, 4, BROWN, 636],
    ["natalie", "Natalie", 1051, 654, 4, BROWN, 667],
    ["katharine", "Katharine", 835, 661, 4, BROWN, 675],
    ["riana", "Riana", 763, 730, 4, BROWN, 744],
    ["amy", "Amy", 893, 721, 5.5, BROWN, 737],
    ["max", "Max", 984, 722, 4, BROWN, 737],
    ["thomas", "Thomas", 1088, 735, 4, BROWN, 748],
    ["george", "George", 161, 518, 4, BROWN, 533],
    ["megan", "Megan", 192, 614, 4, BROWN, 629],
    ["samuel", "Samuel", 220, 701, 4, BROWN, 714],
    ["tom", "Tom", 292, 740, 4, BROWN, 754],

    ["karin", "karin.matzke", 270, 829, 5, BROWN, 843],
    ["alexandra", "Alexandra", 337, 829, 5, BROWN, 843],
    ["stephanie", "Stephanie", 390, 829, 4.5, BROWN, 843],
    ["alice", "Alice", 438, 826, 7, BROWN, 843],
    ["biological", "Biological", 484, 829, 4, BROWN, 843],
    ["alice2", "Alice", 527, 822, 11, BROWN, 843],
    ["jane", "Jane", 570, 829, 4, BROWN, 843],
    ["amanda", "Amanda", 612, 829, 4.5, BROWN, 843],
    ["lizbeth", "Lizbeth", 654, 829, 5, BROWN, 843],
    ["shikhar", "Shikhar", 695, 829, 4.5, BROWN, 843],
    ["rahul", "Rahul", 737, 829, 4.5, BROWN, 843],
    ["jim", "Jim", 782, 828, 5, BROWN, 843],
    ["erika", "Erika", 826, 829, 4.5, BROWN, 843],
    ["sarah", "Sarah", 872, 829, 4.5, BROWN, 843],
    ["elsi", "Elsi", 920, 829, 4, BROWN, 843],
    ["zhan", "Zhan", 975, 822, 11.5, BROWN, 843],
    ["eric", "Eric", 1036, 829, 4, BROWN, 843],
]

const BLUE_GROUP = ["rishabh", "mark", "kathleen", "allison", "john", "kimberly", "meghen", "david", "cyrus",
    "jason", "virginia", "jillian", "christina", "jenna", "alan", "anat", "ken", "vanessa", "gloria", "claudia"]

const PURPLE_GROUP = ["ugur", "chris", "chris2", "anon", "sofus", "mihail", "cheol", "suhas", "edina",
    "lior", "hyuk", "ryan", "jinyong", "laura", "michael"]

// from, to, width
const LINKS = [
    ["michael", "narawut", 6], ["michael", "nicolas", 5], ["michael", "ugur", 6], ["michael", "chris", 5],
    ["michael", "mihail", 5], ["michael", "anon", 3], ["michael", "chris2", 5], ["michael", "ryan", 5],
    ["michael", "hyuk", 5], ["michael", "jinyong", 5], ["michael", "laura", 4], ["michael", "edina", 5],
    ["anon", "laurent", 4], ["michael", "huang", 3], ["michael", "zhigang", 1], ["michael", "ipke", 1],
    ["michael", "charles", 1], ["michael", "pauline", 1], ["michael", "younggeun", 1], ["michael", "linda", 1],
    ["michael", "marisela", 1], ["michael", "claudia", 1], ["michael", "fg", 1], ["michael", "iso", 1],
    ["michael", "stefan", 1], ["michael", "laurent", 1], ["sofus", "stefan", 1], ["sofus", "ipke", 1],
    ["sofus", "iso", 1], ["ugur", "nathaniel", 1], ["laura", "eduardo", 1], ["cheol", "eduardo", 1],
    ["laura", "juncam", 1], ["linda", "gloria", 1], ["linda", "juncam", 1], ["nicolas", "younggeun", 1],
    ["nicolas", "narawut", 1], ["narawut", "charles", 1], ["narawut", "gloria", 1.5], ["narawut", "vanessa", 1],
    ["narawut", "christina", 1], ["narawut", "ken", 1], ["narawut", "cyrus", 1], ["narawut", "jenna", 1],
    ["narawut", "alan", 1], ["vanessa", "joyce", 1], ["jillian", "mike", 1], ["mike", "ivan", 1],
    ["mike", "steven", 1], ["ivan", "steven", 1], ["kris", "fg", 1], ["fg", "stefan", 1], ["fg", "iso", 1],
    ["fg", "ipke", 1], ["stefan", "ipke", 1], ["stefan", "iso", 1], ["iso", "ipke", 1], ["ipke", "zhigang", 1],
    ["mathew", "maysa", 2], ["maysa", "michaelR", 2], ["michaelR", "emily", 2], ["emily", "judith", 2],
    ["mathew", "michaelR", 1], ["maysa", "emily", 1], ["michaelR", "judith", 1], ["claudia", "judith", 2],
    ["claudia", "emily", 2], ["claudia", "michaelR", 2], ["claudia", "maysa", 1], ["claudia", "mathew", 1],
]

const CHARTS = [
    {
        id: "chart-sent",
        top: [10.7, 28, 26.7, 25.7, 29, 37.3, 43.3, 20, 51.7],
        total: [11.2, 28.5, 27.2, 26.2, 29.5, 38, 43.6, 20.3, 80],
        ticks: [["4,000", 76.3], ["3,000", 57], ["2,000", 38], ["1,000", 19], ["0", 0]],
    },
    {
        id: "chart-received",
        top: [19.3, 42.7, 39, 44.3, 52, 60, 60.7, 41.7, 51.7],
        total: [19.3, 43.3, 39, 45, 52, 60.7, 61.3, 42.3, 80],
        ticks: [["6,000", 76.3], ["5,000", 63.7], ["4,000", 50.7], ["3,000", 38.3], ["2,000", 25.7], ["1,000", 12.7], ["0", 0]],
    },
    {
        id: "chart-new",
        top: [51.3, 78.7, 66, 80, 35.7, 50.7, 53.7, 26, 17.3],
        total: [52, 79.3, 66.7, 80, 36.3, 51.3, 54.3, 26, 27],
        ticks: [["150", 77], ["100", 51], ["50", 25.7], ["0", 0]],
    },
]

const SVG_NS = "http://www.w3.org/2000/svg"

function add(parent, tag, attrs, text) {
    const el = document.createElementNS(SVG_NS, tag)
    for (const key in attrs) el.setAttribute(key, attrs[key])
    if (text) el.textContent = text
    parent.appendChild(el)
    return el
}

function drawGraph() {
    const graph = document.querySelector("#graph")
    const byId = {}
    NODES.forEach((n) => { byId[n[0]] = n })

    const links = LINKS.slice()
    // the two big clusters are almost fully connected
    BLUE_GROUP.forEach((a, i) => {
        BLUE_GROUP.forEach((b, j) => {
            if (j > i && (i * 5 + j * 3) % 4 !== 0) links.push([a, b, (i + j) % 5 === 0 ? 1.5 : 1])
        })
    })
    PURPLE_GROUP.forEach((a, i) => {
        PURPLE_GROUP.forEach((b, j) => {
            if (j > i && (i + j * 2) % 2 !== 0) links.push([a, b, 1])
        })
    })

    links.forEach((l) => {
        const a = byId[l[0]], b = byId[l[1]]
        add(graph, "line", {
            x1: a[2], y1: a[3], x2: b[2], y2: b[3],
            stroke: "#8a8a8e", "stroke-opacity": l[2] > 2 ? 0.24 : 0.27, "stroke-width": l[2],
        })
    })

    NODES.forEach((n) => {
        add(graph, "circle", { cx: n[2], cy: n[3], r: n[4], fill: n[5], stroke: "#6b6670", "stroke-opacity": 0.7 })
    })
    NODES.forEach((n) => {
        const offset = n[5] === BLUE || n[5] === RED ? 4 : 4.5
        add(graph, "text", { x: n[2], y: n[6] + offset, class: "node-label" }, n[1])
    })
}

function drawChart(chart) {
    const svg = document.getElementById(chart.id)
    const x0 = 51, bottom = 86, top = bottom - 80

    chart.total.forEach((value, i) => {
        const x = x0 + i * 20
        add(svg, "rect", { x: x, y: bottom - value, width: 19, height: value, fill: "#808080" })
        add(svg, "rect", { x: x, y: bottom - chart.top[i], width: 19, height: chart.top[i], fill: "#000" })
    })

    add(svg, "path", { d: `M${x0 - 8} ${top}H${x0}V${bottom}H${x0 - 8}`, fill: "none", stroke: "#000", "stroke-width": 1.5 })
    add(svg, "line", { x1: x0, y1: bottom, x2: x0 + 180, y2: bottom, stroke: "#666", "stroke-width": 1.5 })

    chart.ticks.forEach((t) => {
        const y = bottom - t[1]
        add(svg, "line", { x1: x0 - 6, y1: y, x2: x0, y2: y, stroke: "#000" })
        add(svg, "text", { x: x0 - 11, y: y + 4, "text-anchor": "end" }, t[0])
    })

    for (let i = 0; i < 5; i++) {
        const x = x0 + 9.5 + i * 40
        add(svg, "line", { x1: x, y1: bottom, x2: x, y2: bottom + 6, stroke: "#666", "stroke-width": 1.5 })
        add(svg, "text", { x: x, y: bottom + 20, "text-anchor": "middle" }, "'" + ["05", "07", "09", "11", "13"][i])
    }
}

drawGraph()
CHARTS.forEach(drawChart)
```
